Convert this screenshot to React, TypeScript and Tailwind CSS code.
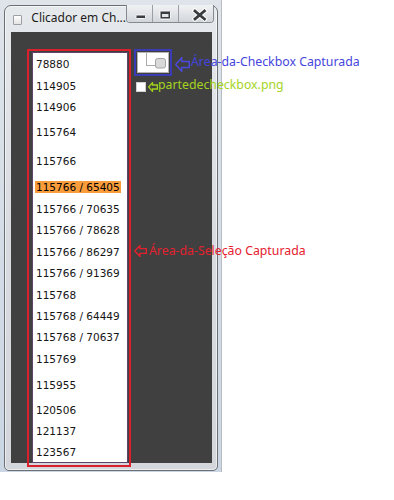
import React from "react";

const rows: { t: string; c: string; hl?: boolean }[] = [
  { t: "78880", c: "mt-0" },
  { t: "114905", c: "mt-[10px]" },
  { t: "114906", c: "mt-[9px]" },
  { t: "115764", c: "mt-[13.7px]" },
  { t: "115766", c: "mt-[17px]" },
  { t: "115766 / 65405", c: "mt-[13.5px]", hl: true },
  { t: "115766 / 70635", c: "mt-[10px]" },
  { t: "115766 / 78628", c: "mt-[9.6px]" },
  { t: "115766 / 86297", c: "mt-[9.4px]" },
  { t: "115766 / 91369", c: "mt-[9.3px]" },
  { t: "115768", c: "mt-[9.7px]" },
  { t: "115768 / 64449", c: "mt-[9.3px]" },
  { t: "115768 / 70637", c: "mt-[9px]" },
  { t: "115769", c: "mt-[9.7px]" },
  { t: "115955", c: "mt-[14px]" },
  { t: "120506", c: "mt-[13px]" },
  { t: "121137", c: "mt-[9.3px]" },
  { t: "123567", c: "mt-[9.3px]" },
];

function Arrow({ color, w, h, sw }: { color: string; w: number; h: number; sw: number }) {
  const hx = w * 0.45;
  const s1 = h * 0.3;
  const s2 = h * 0.7;
  const p = sw / 2;
  const pts = `${p},${h / 2} ${hx},${p} ${hx},${s1} ${w - p},${s1} ${w - p},${s2} ${hx},${s2} ${hx},${h - p}`;
  return (
    <svg width={w} height={h} viewBox={`0 0 ${w} ${h}`}>
      <polygon points={pts} fill="none" stroke={color} strokeWidth={sw} strokeLinejoin="miter" />
    </svg>
  );
}

export default function App() {
  return (
    <div className="relative w-[394px] h-[500px] bg-white overflow-hidden font-['Noto_Sans',sans-serif]">
      <div className="w-[222px] h-[472px] bg-gradient-to-b from-[#dfe4ea] to-[#cad6e3] border-r border-[#b9bdc2] pl-[4px] pt-[5px]">
        <div className="w-[214px] h-[466px] rounded-t-[7px] rounded-b-[5px] border border-[#6b7075] bg-gradient-to-b from-[#e6e9ec] via-[#d8dce0] to-[#d3d7dc] shadow-[inset_0_0_0_1px_rgba(255,255,255,0.55)] flex flex-col">
          <div className="h-[26px] flex items-start">
            <div className="ml-[8px] mt-[9px] w-[10px] h-[10px] border border-[#9c9fa3] bg-gradient-to-b from-white to-[#e4e4e4] rounded-[1px]" />
            <span className="ml-[9px] mt-[4px] text-[12px] leading-[16px] text-[#1c1c1c] whitespace-nowrap">
              Clicador em Ch...
            </span>
            <div className="ml-auto mr-[3px] -mt-[1px] h-[18px] flex rounded-b-[4px] overflow-hidden border border-t-0 border-[#858a90] shadow-[inset_0_0_0_1px_rgba(255,255,255,0.7)]">
              <div className="w-[26px] h-full bg-gradient-to-b from-[#f1f2f4] to-[#d2d6db] border-r border-[#9a9fa5]">
                <svg width="26" height="18" viewBox="0 0 26 18">
                  <rect x="9" y="10" width="9.5" height="3.5" rx="0.8" fill="#3a3d40" stroke="#ffffff" strokeWidth="0.9" />
                </svg>
              </div>
              <div className="w-[26px] h-full bg-gradient-to-b from-[#f1f2f4] to-[#d2d6db] border-r border-[#9a9fa5]">
                <svg width="26" height="18" viewBox="0 0 26 18">
                  <rect x="7" y="6" width="10.5" height="8" rx="0.8" fill="#3a3d40" stroke="#ffffff" strokeWidth="0.9" />
                  <rect x="9" y="9" width="6.5" height="3" fill="#e2e5e8" />
                </svg>
              </div>
              <div className="w-[42px] h-full bg-gradient-to-b from-[#f1f2f4] to-[#d2d6db]">
                <svg width="42" height="18" viewBox="0 0 42 18">
                  <path d="M16 6 L25.5 14 M25.5 6 L16 14" stroke="#ffffff" strokeWidth="4.8" strokeLinecap="square" />
                  <path d="M16 6 L25.5 14 M25.5 6 L16 14" stroke="#3a3d40" strokeWidth="2.8" strokeLinecap="square" />
                </svg>
              </div>
            </div>
          </div>
          <div className="ml-[6px] mr-[5px] h-[431px] bg-[#404040] flex items-start pl-[21px] pt-[20px]">
            <div className="w-[96px] h-[411px] bg-white border border-[#5e4468] pl-[3px] pt-[4.5px] overflow-hidden font-['DejaVu_Sans',sans-serif] text-[10.5px] leading-[12px] text-[#151515]">
              {rows.map((r, i) => (
                <div key={i} className={`${r.c} h-[12px] whitespace-nowrap`}>
                  {r.hl ? (
                    <span className="-ml-[1px] px-[1px] bg-[#f99d3c] text-black">{r.t}</span>
                  ) : (
                    r.t
                  )}
                </div>
              ))}
            </div>
            <div className="ml-[9px] flex flex-col">
              <div className="w-[32px] h-[21px] bg-white border border-[#b4b4b4]">
                <svg width="30" height="19" viewBox="0 0 30 19">
                  <path d="M8.5 0.5 V12.5 H17" stroke="#555555" strokeWidth="1" strokeDasharray="1 1" fill="none" />
                  <rect x="17.5" y="5.5" width="10" height="9.5" rx="2" fill="#d9d9d9" stroke="#a3a3a3" strokeWidth="1" />
                </svg>
              </div>
              <div className="-ml-[1px] mt-[9px] w-[10px] h-[10px] bg-white border border-[#d0d0d0]" />
            </div>
          </div>
        </div>
      </div>

      <div className="absolute left-[27px] top-[49px] w-[104px] h-[418px] border-2 border-[#d9202c]" />
      <div className="absolute left-[134px] top-[49px] w-[38px] h-[27px] border-2 border-[#3b3bb5]" />

      <div className="absolute left-[175px] top-[57px]">
        <Arrow color="#4a4ae0" w={15} h={15} sw={1.4} />
      </div>
      <div className="absolute left-[191px] top-[54px] text-[12.3px] leading-[16px] text-[#4545dd] whitespace-nowrap">
        Área-da-Checkbox Capturada
      </div>

      <div className="absolute left-[148px] top-[82px]">
        <Arrow color="#a2d21a" w={10} h={10} sw={1.3} />
      </div>
      <div className="absolute left-[158px] top-[77.3px] text-[12.3px] leading-[16px] text-[#a4d41e] whitespace-nowrap">
        partedecheckbox.png
      </div>

      <div className="absolute left-[134px] top-[245px]">
        <Arrow color="#e2202e" w={13} h={12} sw={1.4} />
      </div>
      <div className="absolute left-[149px] top-[243.3px] text-[12.3px] leading-[16px] text-[#e5202f] whitespace-nowrap">
        Área-da-Seleção Capturada
      </div>
    </div>
  );
}
